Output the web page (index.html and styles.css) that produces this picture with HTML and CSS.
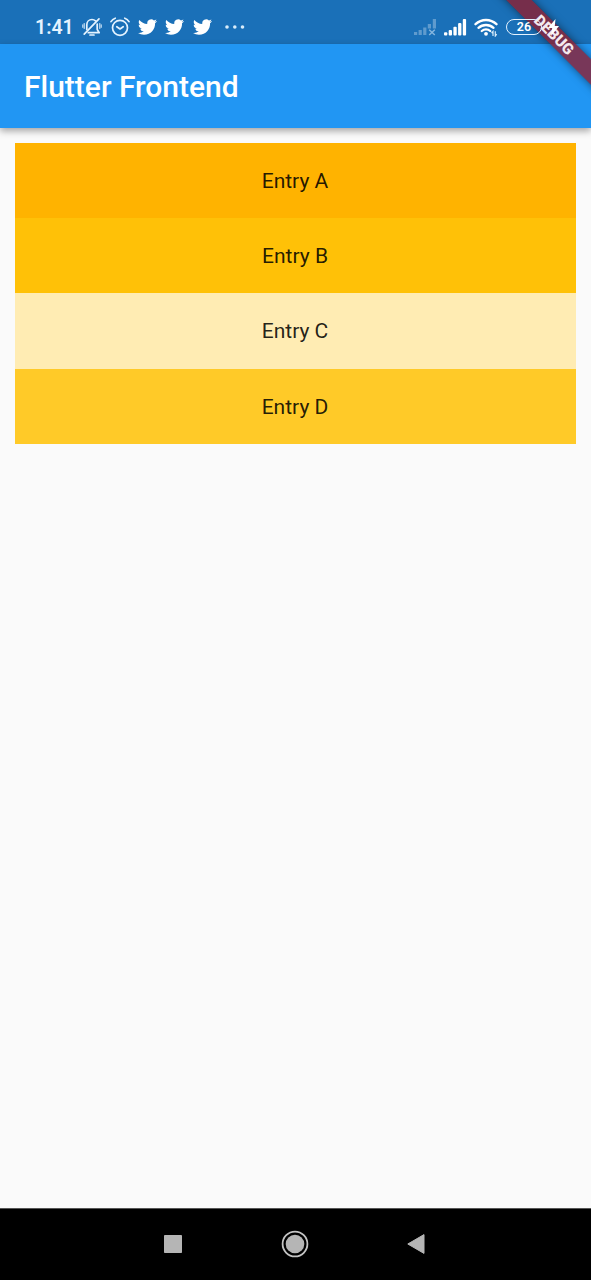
FILE: index.html
```html
<!DOCTYPE html>
<html lang="en">
<head>
<meta charset="utf-8">
<title>Flutter Frontend</title>
<link rel="stylesheet" href="styles.css">
</head>
<body>
<svg class="defs" width="0" height="0">
  <symbol id="bird" viewBox="0 2 24 20"><path d="M23.95 4.57a10 10 0 0 1-2.82.77 4.96 4.96 0 0 0 2.16-2.72c-.95.55-2 .95-3.13 1.18a4.92 4.92 0 0 0-8.38 4.48C7.69 8.1 4.07 6.13 1.64 3.16a4.82 4.82 0 0 0-.67 2.48c0 1.71.87 3.21 2.19 4.1a4.9 4.9 0 0 1-2.23-.62v.06a4.92 4.92 0 0 0 3.95 4.83 5 5 0 0 1-2.21.08 4.94 4.94 0 0 0 4.6 3.42A9.87 9.87 0 0 1 0 19.54a13.99 13.99 0 0 0 7.56 2.21c9.05 0 14-7.5 14-13.98 0-.21 0-.42-.02-.63a9.94 9.94 0 0 0 2.46-2.55z"/></symbol>
</svg>
<div class="screen">
  <header class="status-bar">
    <div class="status-left">
      <span class="clock">1:41</span>
      <svg class="icon-bell" width="20" height="20" viewBox="0 0 20 20">
        <g fill="none" stroke="#e4f3ff" stroke-width="1.7" stroke-linecap="round" stroke-linejoin="round">
          <path d="M4.8 12.5V7.7C4.8 4.8 7 2.5 10 2.5c1.4 0 2.6.5 3.5 1.3M15.2 7v5.5l2 3.2H6.3"/>
          <path d="M17 1.8L2.2 17.2"/>
          <path d="M2.2 6.5v5M.8 7.8v2.6M17.8 6.5v5M19.2 7.8v2.6" stroke-width="1"/>
          <path d="M8 18h4"/>
        </g>
      </svg>
      <svg class="icon-alarm" width="20" height="20" viewBox="0 0 20 20">
        <g fill="none" stroke="#e4f3ff" stroke-width="1.7" stroke-linecap="round" stroke-linejoin="round">
          <circle cx="10" cy="10.8" r="7.5"/>
          <path d="M6.8 9.7L10 12l3.2-2.3M1 4.7Q2.5 2 5.2 1.2M19 4.7Q17.5 2 14.8 1.2"/>
        </g>
      </svg>
      <svg class="bird" width="19" height="16"><use href="#bird"/></svg>
      <svg class="bird" width="19" height="16"><use href="#bird"/></svg>
      <svg class="bird" width="19" height="16"><use href="#bird"/></svg>
      <svg class="dots" width="20" height="4" viewBox="0 0 20 4" fill="#d8ecfa"><circle cx="2" cy="2" r="1.8"/><circle cx="9.8" cy="2" r="1.8"/><circle cx="17.5" cy="2" r="1.8"/></svg>
    </div>
    <div class="status-right">
      <svg width="23" height="17" viewBox="0 0 23 17">
        <g fill="#5f9bce"><path d="M0 13h3.2v3H0zM4.6 11h3.2v5H4.6zM9.2 8.5h3.2V16H9.2zM13.8 5H17v4.5h-3.2zM18.8 0H22v9.5h-3.2z"/></g>
        <path d="M15.2 10.8l5.6 5.2M20.8 10.8L15.2 16" stroke="#84b5de" stroke-width="1.5"/>
      </svg>
      <svg class="signal" width="23" height="17" viewBox="0 0 23 17" fill="#fff">
        <rect x="0" y="13.2" width="3.3" height="3.2" rx="1"/><rect x="4.7" y="11" width="3.3" height="5.4" rx="1"/><rect x="9.4" y="7.7" width="3.3" height="8.7" rx="1"/><rect x="14.1" y="4" width="3.3" height="12.4" rx="1"/><rect x="18.8" y="0" width="3.3" height="16.4" rx="1"/>
      </svg>
      <svg class="wifi" width="24" height="19" viewBox="0 0 24 19">
        <g fill="none" stroke="#fff" stroke-width="2.3" stroke-linecap="round"><path d="M1.5 6.2Q6 2 12 2T22.5 6.2M4.5 9.8Q7.6 7 12 7T19.5 9.8M7.8 13Q9.6 11.4 12 11.4T16.2 13"/></g>
        <circle cx="12" cy="15.8" r="1.9" fill="#fff"/>
        <path d="M19 18v-4.6l-1.4 1.8M21.3 13.3v4.7l1.4-1.8" fill="none" stroke="#d8ecfa" stroke-width="1.2"/>
      </svg>
      <div class="battery">26</div>
      <svg class="bolt" width="11" height="17" viewBox="0 0 11 17"><path d="M7.5 0L0 9h4.2L3 17 11 7H6.8z" fill="#fff"/></svg>
    </div>
  </header>
  <div class="app-bar"><h1>Flutter Frontend</h1></div>
  <main class="content">
    <ul class="entries">
      <li class="entry amber-600">Entry A</li>
      <li class="entry amber-500">Entry B</li>
      <li class="entry amber-100">Entry C</li>
      <li class="entry amber-400">Entry D</li>
    </ul>
  </main>
  <nav class="nav-bar">
    <svg width="20" height="28" viewBox="0 0 20 28"><rect x="1" y="5" width="18" height="18" rx=".8" fill="#b5b5b5"/></svg>
    <svg width="28" height="28" viewBox="0 0 28 28"><circle cx="14" cy="14" r="12.4" fill="none" stroke="#c4c4c4" stroke-width="1.8"/><circle cx="14" cy="14" r="9.3" fill="#b5b5b5"/></svg>
    <svg width="20" height="28" viewBox="0 0 20 28"><path d="M1.8 14L18 4.6v18.8z" fill="#b5b5b5" stroke="#b5b5b5" stroke-linejoin="round"/></svg>
  </nav>
  <div class="debug-corner"><div class="debug-ribbon">DEBUG</div></div>
</div>
</body>
</html>
```
FILE: styles.css
```css
* { box-sizing: border-box; }
body { margin: 0; font-family: Roboto, sans-serif; }
.defs { position: absolute; }
.screen {
  position: relative;
  display: flex;
  flex-direction: column;
  width: 591px;
  height: 1280px;
  overflow: hidden;
  background: #fafafa;
}
.status-bar {
  display: flex;
  justify-content: space-between;
  height: 44px;
  padding: 10px 32px 0 35px;
  background: #1a70b8;
}
.status-left, .status-right {
  position: relative;
  z-index: 3;
  display: flex;
  align-items: center;
  height: 34px;
}
.clock {
  width: 39px;
  padding-top: 1px;
  color: #e4f3ff;
  font-size: 19.5px;
  font-weight: 600;
  line-height: 34px;
}
.icon-bell { margin-left: 8px; }
.icon-alarm { margin-left: 8px; }
.bird { margin-left: 8.2px; fill: #fff; }
.dots { margin-left: 13.4px; }
.signal { margin-left: 6.5px; }
.wifi { margin-left: 7.5px; }
.battery {
  width: 36px;
  height: 16px;
  margin-left: 8px;
  border: 1.5px solid #e4f3ff;
  border-radius: 8px;
  color: #fff;
  font-size: 12.5px;
  font-weight: 600;
  line-height: 14px;
  text-align: center;
}
.bolt { margin-left: 6px; }
.app-bar {
  z-index: 1;
  display: flex;
  align-items: center;
  height: 84px;
  padding: 2px 0 0 24px;
  background: #2196f3;
  box-shadow: 0 3px 7px rgba(0, 0, 0, .35);
}
.app-bar h1 {
  margin: 0;
  color: #fff;
  font-size: 30px;
  font-weight: 500;
  line-height: 36px;
}
.content { flex: 1; padding: 15px; }
.entries { margin: 0; padding: 0; list-style: none; }
.entry {
  display: flex;
  align-items: center;
  justify-content: center;
  height: 75.2px;
  padding: 1px 1px 0 0;
  color: rgba(0, 0, 0, .87);
  font-size: 21px;
}
.amber-600 { background: #ffb300; }
.amber-500 { background: #ffc107; }
.amber-100 { background: #ffecb3; }
.amber-400 { background: #ffca28; }
.nav-bar {
  display: flex;
  justify-content: space-between;
  align-items: center;
  height: 72px;
  padding: 0 165px 1px 163px;
  border-top: 1px solid #555;
  background: #000;
}
.debug-corner {
  position: absolute;
  top: 0;
  right: 0;
  z-index: 2;
  width: 120px;
  height: 120px;
  overflow: hidden;
}
.debug-ribbon {
  position: absolute;
  top: 27px;
  left: -16px;
  width: 200px;
  height: 18px;
  padding-right: 3px;
  background: rgba(145, 28, 45, .78);
  box-shadow: 0 0 9px rgba(0, 0, 0, .5);
  color: #f3e8ee;
  font-size: 15.3px;
  font-weight: 900;
  line-height: 18px;
  text-align: center;
  transform: rotate(45deg);
}
```
